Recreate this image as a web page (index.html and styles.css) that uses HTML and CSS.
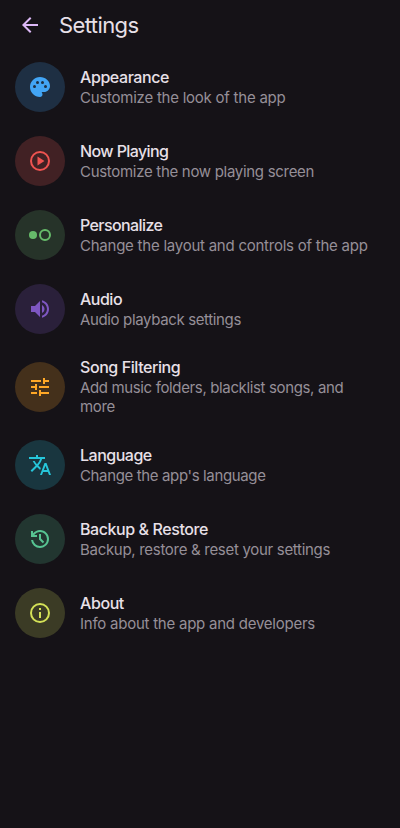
FILE: index.html
```html
<!DOCTYPE html>
<html lang="en">
<head>
<meta charset="utf-8">
<title>Settings</title>
<link rel="stylesheet" href="styles.css">
</head>
<body>
<header class="bar">
  <svg class="icon" viewBox="0 0 24 24"><path d="M20 11H7.83l5.59-5.59L12 4l-8 8 8 8 1.41-1.41L7.83 13H20z"/></svg>
  <h1>Settings</h1>
</header>
<main>
  <a class="row blue">
    <span class="badge"><svg class="icon" viewBox="0 0 24 24"><path d="M12 2C6.49 2 2 6.49 2 12s4.49 10 10 10c1.38 0 2.5-1.12 2.5-2.5 0-.61-.23-1.2-.64-1.67-.08-.1-.13-.21-.13-.33 0-.28.22-.5.5-.5H16c3.31 0 6-2.69 6-6 0-4.96-4.49-9-10-9zM6.500 13a1.500 1.500 0 1 1 0-3 1.500 1.500 0 0 1 0 3zM9.500 9a1.500 1.500 0 1 1 0-3 1.500 1.500 0 0 1 0 3zM14.500 9a1.500 1.500 0 1 1 0-3 1.500 1.500 0 0 1 0 3zM17.500 13a1.500 1.500 0 1 1 0-3 1.500 1.500 0 0 1 0 3z"/></svg></span>
    <span class="text"><span class="title wide">Appearance</span><span class="sub wide">Customize the look of the app</span></span>
  </a>
  <a class="row red">
    <span class="badge"><svg class="icon" viewBox="0 0 24 24"><path d="M9.500 16.500l7-4.500-7-4.500zM12 2a10 10 0 1 0 0 20 10 10 0 0 0 0-20zm0 18a8 8 0 1 1 0-16 8 8 0 0 1 0 16z"/></svg></span>
    <span class="text"><span class="title tight">Now Playing</span><span class="sub">Customize the now playing screen</span></span>
  </a>
  <a class="row green">
    <span class="badge"><svg class="icon" viewBox="0 0 24 24"><circle cx="5" cy="12" r="4"/><path d="M17 6a6 6 0 1 0 0 12 6 6 0 0 0 0-12zm0 10a4 4 0 1 1 0-8 4 4 0 0 1 0 8z"/></svg></span>
    <span class="text"><span class="title tight">Personalize</span><span class="sub wide">Change the layout and controls of the app</span></span>
  </a>
  <a class="row purple">
    <span class="badge"><svg class="icon" viewBox="0 0 24 24"><path d="M3 9v6h4l5 5V4L7 9H3zm13.500 3c0-1.770-1.020-3.290-2.500-4.030v8.050c1.480-.73 2.500-2.250 2.500-4.020zM14 3.230v2.060c2.890.86 5 3.540 5 6.710s-2.110 5.850-5 6.710v2.060c4.010-.91 7-4.490 7-8.770s-2.990-7.860-7-8.770z"/></svg></span>
    <span class="text"><span class="title">Audio</span><span class="sub tight">Audio playback settings</span></span>
  </a>
  <a class="row orange">
    <span class="badge"><svg class="icon" viewBox="0 0 24 24"><path d="M3 17v2h6v-2H3zM3 5v2h10V5H3zm10 16v-2h8v-2h-8v-2h-2v6h2zM7 9v2H3v2h4v2h2V9H7zm14 4v-2H11v2h10zm-6-4h2V7h4V5h-4V3h-2v6z"/></svg></span>
    <span class="text"><span class="title wide">Song Filtering</span><span class="sub tight">Add music folders, blacklist songs, and<br>more</span></span>
  </a>
  <a class="row cyan">
    <span class="badge"><svg class="icon" viewBox="0 0 24 24"><path d="M12.870 15.070l-2.540-2.510.03-.03c1.740-1.940 2.980-4.170 3.710-6.530H17V4h-7V2H8v2H1v1.990h11.170C11.500 7.920 10.440 9.750 9 11.350 8.070 10.320 7.300 9.190 6.690 8h-2c.73 1.630 1.730 3.170 2.980 4.560l-5.090 5.020L4 19l5-5 3.110 3.110.76-2.040zM18.500 10h-2L12 22h2l1.120-3h4.750L21 22h2l-4.500-12zm-2.620 7l1.620-4.330L19.120 17h-3.240z"/></svg></span>
    <span class="text"><span class="title">Language</span><span class="sub tight">Change the app's language</span></span>
  </a>
  <a class="row mint">
    <span class="badge"><svg class="icon" viewBox="0 -960 960 960"><path d="M480-120q-138 0-240.500-91.500T122-440h82q14 104 92.500 172T480-200q117 0 198.500-81.500T760-480q0-117-81.500-198.500T480-760q-69 0-129 32t-101 88h110v80H120v-240h80v94q51-64 124.500-99T480-840q75 0 140.500 28.500t114 77q48.500 48.500 77 114T840-480q0 75-28.500 140.500t-77 114q-48.500 48.500-114 77T480-120Zm112-192L440-464v-216h80v184l128 128-56 56Z"/></svg></span>
    <span class="text"><span class="title wide">Backup &amp; Restore</span><span class="sub">Backup, restore &amp; reset your settings</span></span>
  </a>
  <a class="row lime">
    <span class="badge"><svg class="icon" viewBox="0 0 24 24"><path d="M11 7h2v2h-2zm0 4h2v6h-2zM12 2a10 10 0 1 0 0 20 10 10 0 0 0 0-20zm0 18a8 8 0 1 1 0-16 8 8 0 0 1 0 16z"/></svg></span>
    <span class="text"><span class="title wide">About</span><span class="sub wide">Info about the app and developers</span></span>
  </a>
</main>
</body>
</html>
```
FILE: styles.css
```css
* { box-sizing: border-box; }
body {
  margin: 0;
  min-height: 828px;
  background: #151217;
  color: #e8e0e8;
  font-family: Inter, Roboto, sans-serif;
}
.bar {
  display: flex;
  align-items: center;
  gap: 17px;
  height: 50px;
  padding-left: 18px;
  color: #dcb8f6;
}
.bar h1 {
  margin: 0;
  color: #e8e0e8;
  font-size: 22px;
  font-weight: 400;
  line-height: 28px;
  letter-spacing: -0.6px;
}
.icon { display: block; width: 24px; height: 24px; fill: currentColor; }
.row {
  display: flex;
  align-items: center;
  gap: 15px;
  padding: 12px 15px;
}
.badge {
  display: grid;
  place-items: center;
  flex: none;
  width: 50px;
  height: 50px;
  border-radius: 50%;
}
.text { display: flex; flex-direction: column; white-space: nowrap; }
.title {
  padding-bottom: 2px;
  font-size: 16px;
  font-weight: 500;
  line-height: 18px;
  letter-spacing: -0.5px;
}
.title.wide { letter-spacing: -0.42px; }
.title.tight { letter-spacing: -0.6px; }
.sub { color: #958f98; font-size: 15px; line-height: 19px; letter-spacing: -0.3px; }
.sub.wide { letter-spacing: -0.24px; }
.sub.tight { letter-spacing: -0.36px; }

.blue .badge { color: #42a5f5; background: #1e2f43; }
.red .badge { color: #ef5350; background: #412124; }
.green .badge { color: #66bb6a; background: #263329; }
.purple .badge { color: #7e57c2; background: #2a203a; }
.orange .badge { color: #ffa726; background: #44301b; }
.cyan .badge { color: #26c6da; background: #19363f; }
.mint .badge { color: #57c492; background: #223630; }
.lime .badge { color: #d4e157; background: #3b3b25; }
```
